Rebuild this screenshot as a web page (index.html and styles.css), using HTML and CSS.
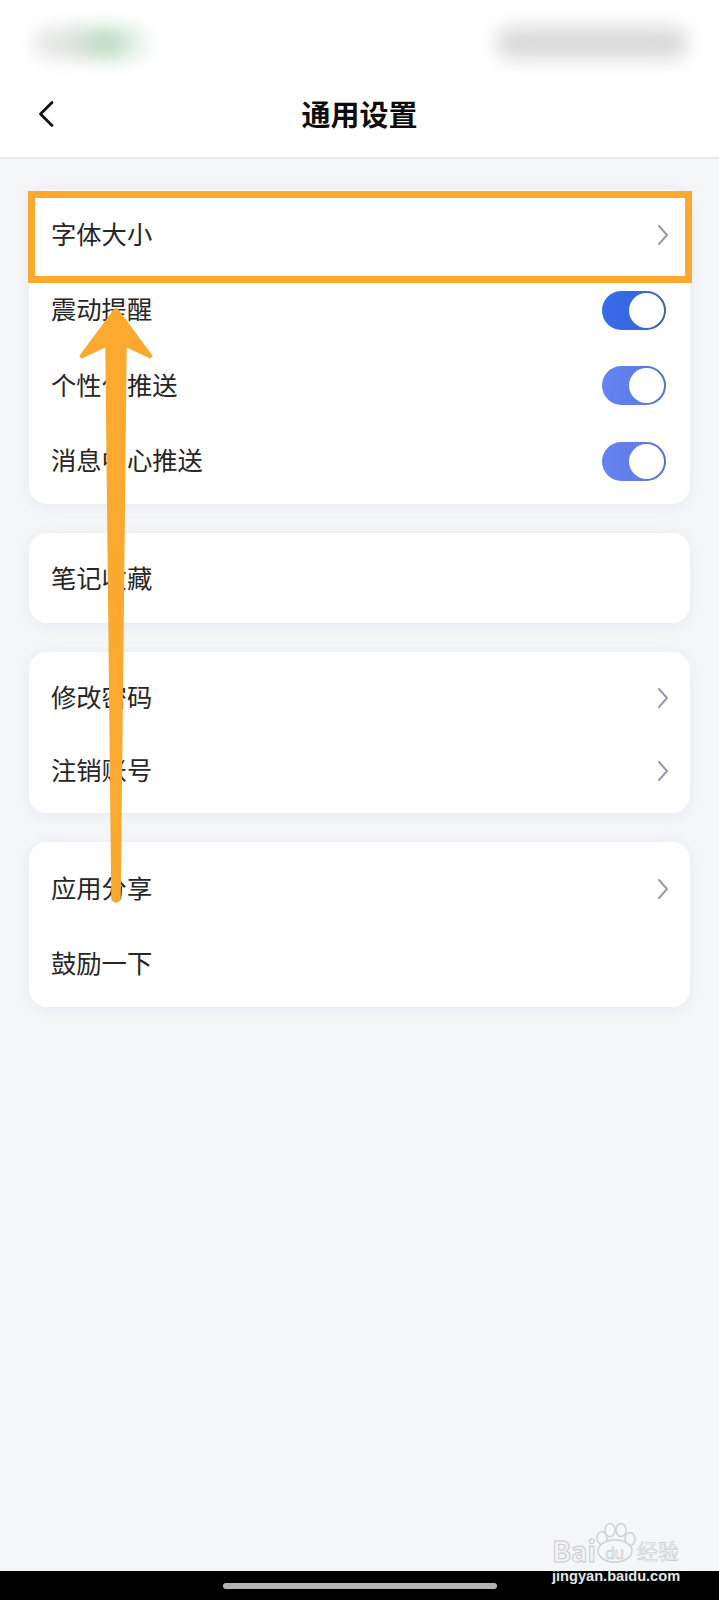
FILE: index.html
```html
<!DOCTYPE html>
<html lang="zh-CN">

<head>
    <meta charset="UTF-8">
    <meta name="viewport" content="width=device-width, initial-scale=1.0">
    <title>通用设置</title>
    <link rel="stylesheet" href="styles.css">
</head>

<body>
    <header class="top">
        <div class="status">
            <div class="blur-box blur-left"><span class="blur-green"></span></div>
            <div class="blur-box blur-right"><span class="blur-gray"></span></div>
        </div>
        <nav class="nav">
            <svg class="back" viewBox="0 0 18 28" fill="none">
                <path d="M15 2.5L3.5 14L15 25.5" stroke="#111" stroke-width="2.8" stroke-linecap="round" stroke-linejoin="round" />
            </svg>
            <h1>通用设置</h1>
        </nav>
    </header>

    <main class="list">
        <section class="card card-first">
            <div class="row row-tall"><span>字体大小</span>
                <svg class="more" viewBox="0 0 12 22" fill="none"><path d="M2 2L10 11L2 20" stroke="#9a97b4" stroke-width="2" stroke-linecap="round" stroke-linejoin="round" /></svg>
            </div>
            <div class="row row-tall"><span>震动提醒</span><div class="switch switch-dark"><i></i></div></div>
            <div class="row row-tall"><span>个性化推送</span><div class="switch"><i></i></div></div>
            <div class="row row-tall"><span>消息中心推送</span><div class="switch"><i></i></div></div>
        </section>

        <section class="card card-single">
            <div class="row"><span>笔记收藏</span></div>
        </section>

        <section class="card card-pair">
            <div class="row"><span>修改密码</span>
                <svg class="more" viewBox="0 0 12 22" fill="none"><path d="M2 2L10 11L2 20" stroke="#9a97b4" stroke-width="2" stroke-linecap="round" stroke-linejoin="round" /></svg>
            </div>
            <div class="row"><span>注销账号</span>
                <svg class="more" viewBox="0 0 12 22" fill="none"><path d="M2 2L10 11L2 20" stroke="#9a97b4" stroke-width="2" stroke-linecap="round" stroke-linejoin="round" /></svg>
            </div>
        </section>

        <section class="card card-share">
            <div class="row row-tall"><span>应用分享</span>
                <svg class="more" viewBox="0 0 12 22" fill="none"><path d="M2 2L10 11L2 20" stroke="#9a97b4" stroke-width="2" stroke-linecap="round" stroke-linejoin="round" /></svg>
            </div>
            <div class="row row-tall"><span>鼓励一下</span></div>
        </section>
    </main>

    <footer class="home-bar"><span></span></footer>

    <!-- annotation drawn on top of the screenshot -->
    <div class="mark-box"></div>
    <svg class="mark-arrow" viewBox="0 0 719 1600" fill="none">
        <path d="M116 310L150 356L124.500 344L118.500 899Q116 902 113.500 899L107.500 344L82 356Z" fill="#fba92f" stroke="#fba92f" stroke-width="4.500" stroke-linejoin="round" />
    </svg>

    <div class="watermark">
        <svg class="paw" viewBox="0 0 40 40" fill="#f6f7f9" stroke="#cfd0d3" stroke-width="1.5">
            <ellipse cx="6" cy="15" rx="5" ry="6.500" />
            <ellipse cx="14" cy="7" rx="5" ry="6.500" />
            <ellipse cx="25" cy="7" rx="5" ry="6.500" />
            <ellipse cx="34" cy="16" rx="5" ry="6.500" />
            <ellipse cx="19" cy="28" rx="17" ry="11" />
        </svg>
        <div class="wm-logo"><span>Bai</span><span class="wm-du">du</span><span class="wm-cn">经验</span></div>
        <div class="wm-url">jingyan.baidu.com</div>
    </div>
</body>

</html>
```

FILE: styles.css
```css
* {
    box-sizing: border-box;
    font-family: "Noto Sans CJK SC", "Liberation Sans", sans-serif;
}

body {
    position: relative;
    margin: 0;
    width: 719px;
    height: 1600px;
    overflow: hidden;
    display: flex;
    flex-direction: column;
    background-color: #f5f6f8;
}

.top {
    height: 159px;
    background-color: white;
    border-bottom: 2px solid #e8e9ec;
}

.status {
    height: 75px;
    padding: 21px 25px 0 20px;
    display: flex;
    justify-content: space-between;
}

.blur-box {
    height: 43px;
    display: flex;
    align-items: center;
    justify-content: center;
}

.blur-left {
    width: 152px;
    justify-content: flex-start;
    padding-left: 12px;
}

.blur-right {
    width: 205px;
}

.blur-green {
    width: 120px;
    height: 32px;
    border-radius: 14px;
    background: linear-gradient(90deg, #eceeec 0%, #e0e2e0 30%, #b6dcbe 65%, #e6efe8 85%, #f8f9f8 100%);
    filter: blur(9px);
}

.blur-gray {
    width: 190px;
    height: 32px;
    border-radius: 13px;
    background-color: #d8d8d8;
    filter: blur(10px);
}

.nav {
    position: relative;
    height: 82px;
    padding-bottom: 6px;
    display: flex;
    align-items: center;
    justify-content: center;
}

.nav h1 {
    margin: 0;
    font-size: 29px;
    font-weight: 700;
    color: #0d0d0d;
}

.back {
    position: absolute;
    left: 37px;
    top: 25px;
    width: 18px;
    height: 28px;
}

.list {
    flex: 1;
    padding: 31px 29px 0;
    display: flex;
    flex-direction: column;
    gap: 29px;
}

.card {
    background-color: white;
    border-radius: 18px;
    box-shadow: 0 2px 14px rgba(210, 214, 232, 0.4);
}

.card-first {
    height: 314px;
    padding-top: 7px;
}

.card-single {
    height: 90px;
    padding-top: 9px;
}

.card-pair {
    height: 161px;
    padding-top: 9px;
}

.card-share {
    height: 165px;
    padding-top: 9px;
}

.row {
    height: 73px;
    padding: 0 22px;
    display: flex;
    align-items: center;
    justify-content: space-between;
    font-size: 25.300px;
    font-weight: 400;
    color: #262626;
}

.row span {
    margin-bottom: 4px;
}

.row-tall {
    height: 75.500px;
}

.more {
    width: 12px;
    height: 22px;
    margin-right: -1px;
}

.switch {
    width: 64px;
    height: 39px;
    margin-right: 2px;
    padding: 2px;
    border-radius: 20px;
    display: flex;
    justify-content: flex-end;
    background: linear-gradient(90deg, #6584f1 0%, #5f7ce8 60%, #5670c8 100%);
}

.switch-dark {
    background: linear-gradient(90deg, #386be6 0%, #3567e0 60%, #41619f 100%);
}

.switch i {
    width: 35px;
    height: 35px;
    border-radius: 50%;
    background-color: white;
}

.home-bar {
    height: 29px;
    background-color: black;
    padding-top: 12px;
    padding-left: 223px;
}

.home-bar span {
    display: block;
    width: 274px;
    height: 6px;
    border-radius: 3px;
    background-color: #b3b3b3;
}

.mark-box {
    position: absolute;
    left: 28px;
    top: 191px;
    width: 664px;
    height: 92px;
    border: 7px solid #fba92f;
}

.mark-arrow {
    position: absolute;
    left: 0;
    top: 0;
    width: 719px;
    height: 1600px;
}

.watermark {
    position: absolute;
    left: 552px;
    top: 1523px;
    width: 130px;
    height: 62px;
}

.paw {
    position: absolute;
    left: 44px;
    top: 0;
    width: 40px;
    height: 40px;
}

.wm-logo {
    position: absolute;
    left: 0;
    top: 14px;
    height: 26px;
    display: flex;
    font-family: "Liberation Sans", sans-serif;
    font-size: 28px;
    font-weight: 700;
    line-height: 26px;
    color: #f3f4f6;
    -webkit-text-stroke: 1px #c9cacd;
}

.wm-du {
    font-family: "Liberation Sans", sans-serif;
    font-size: 17px;
    font-weight: 400;
    margin: 4px 13px 0 9px;
    -webkit-text-stroke: 0.5px #c0c1c4;
}

.wm-cn {
    font-size: 21px;
    font-weight: 400;
    -webkit-text-stroke: 0.6px #c9cacd;
}

.wm-url {
    position: absolute;
    left: 0;
    top: 46px;
    font-family: "Liberation Sans", sans-serif;
    font-size: 14.600px;
    font-weight: 700;
    line-height: 15px;
    color: #e6e6e6;
}
```
